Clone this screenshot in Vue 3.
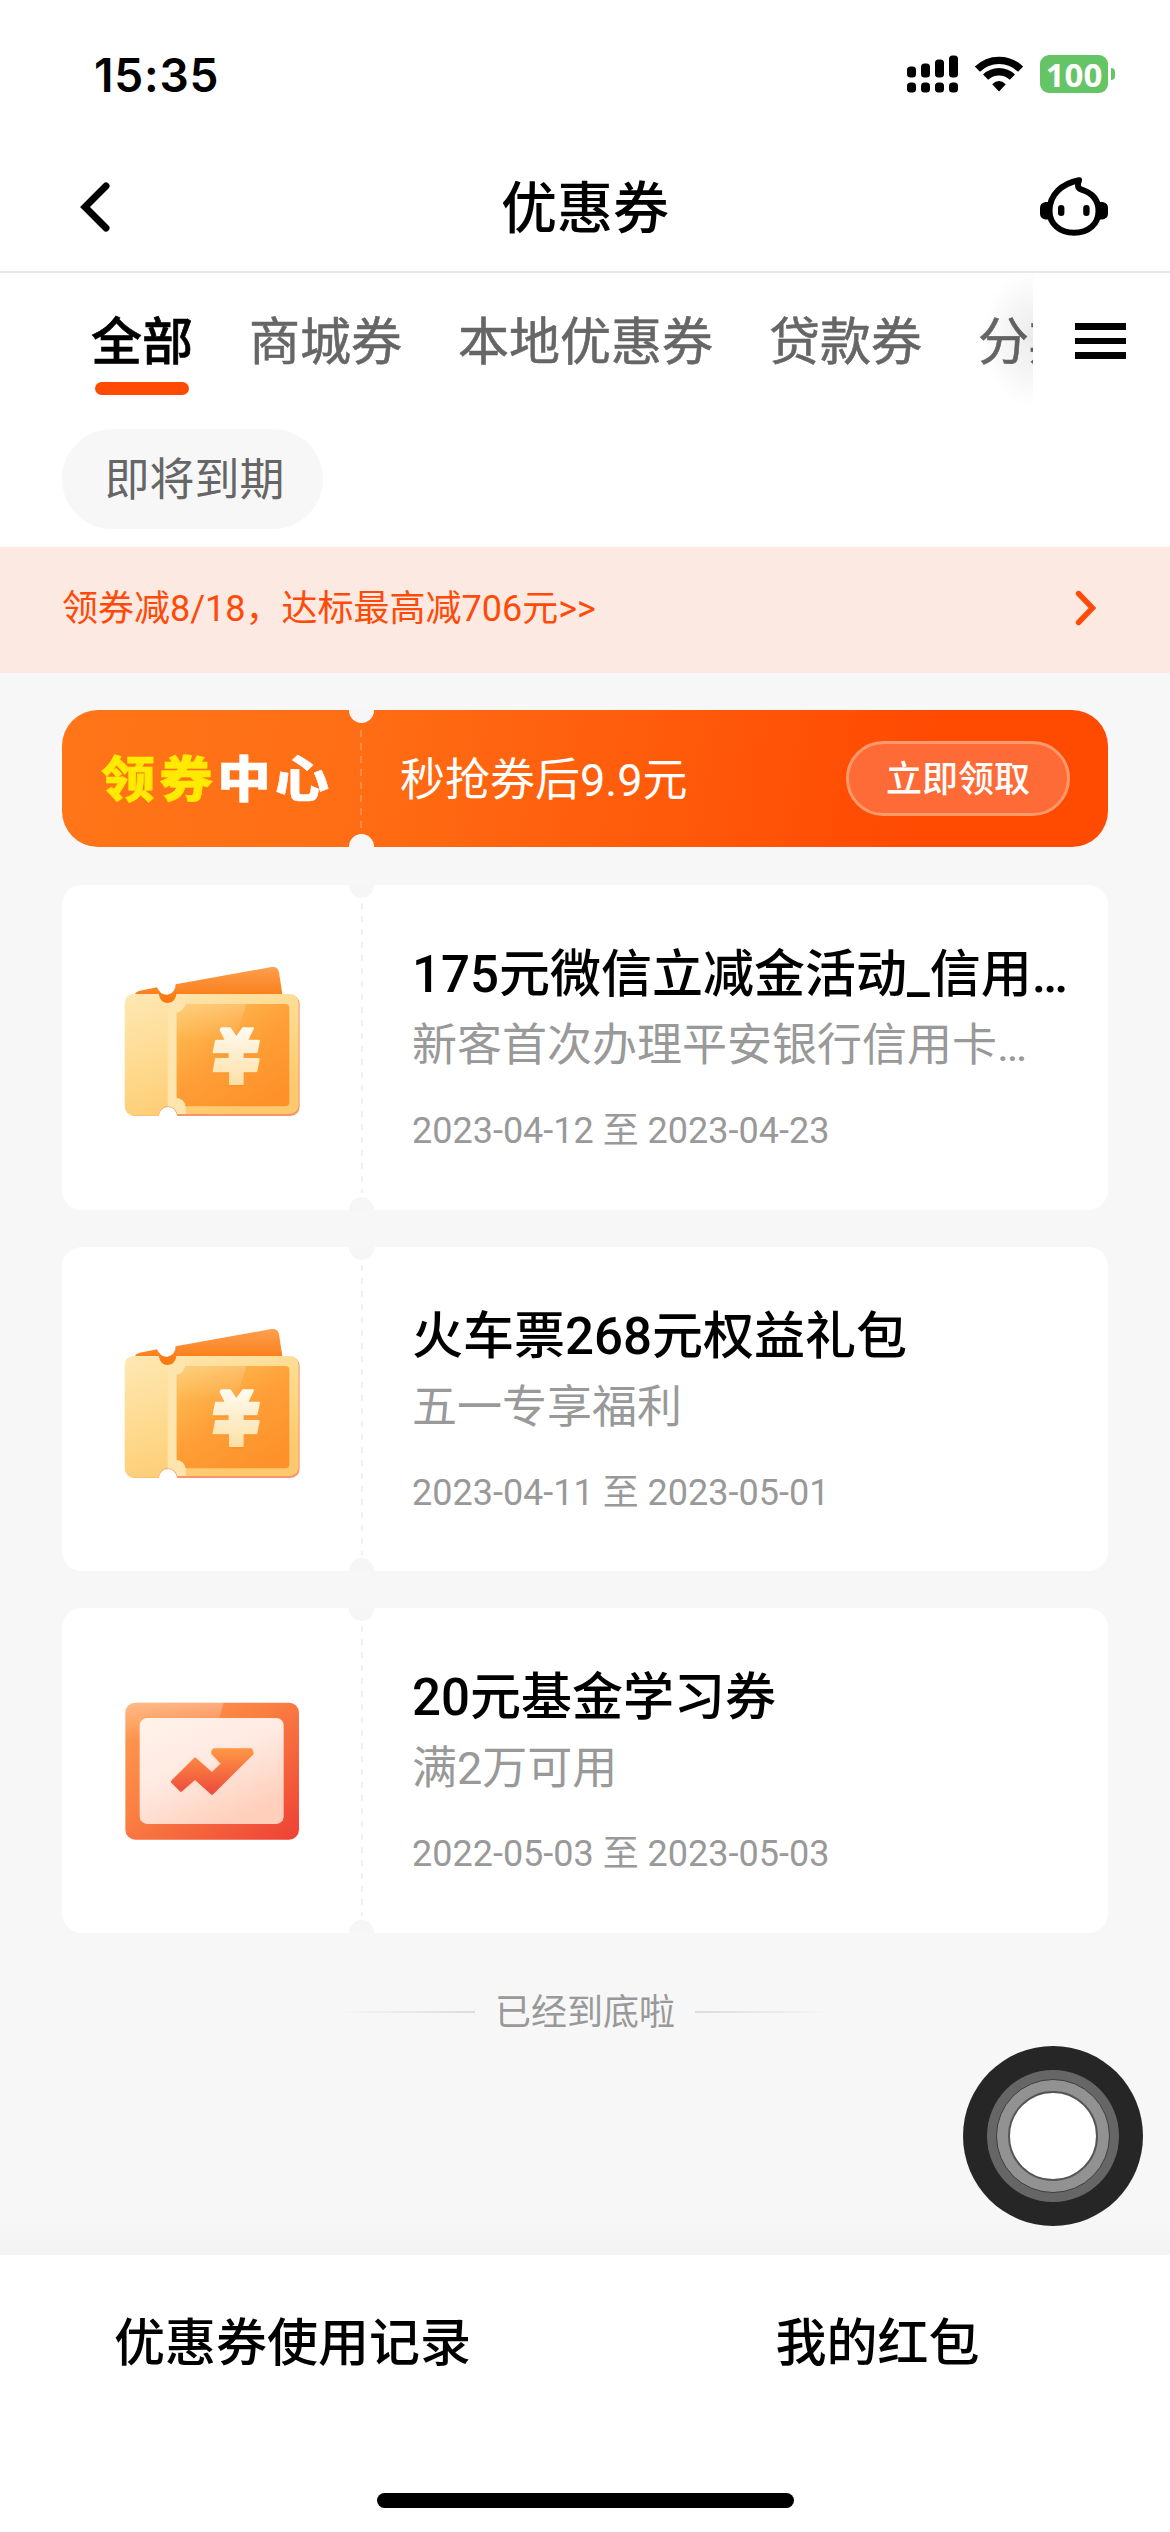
<script setup>
const tabs = ['全部', '商城券', '本地优惠券', '贷款券', '分期券']

const coupons = [
  {
    icon: 'ticket',
    title: '175元微信立减金活动_信用…',
    desc: '新客首次办理平安银行信用卡…',
    from: '2023-04-12',
    to: '2023-04-23',
  },
  {
    icon: 'ticket',
    title: '火车票268元权益礼包',
    desc: '五一专享福利',
    from: '2023-04-11',
    to: '2023-05-01',
  },
  {
    icon: 'fund',
    title: '20元基金学习券',
    desc: '满2万可用',
    from: '2022-05-03',
    to: '2023-05-03',
  },
]
</script>

<template>
  <div class="screen">
    <div class="status">
      <span class="time">15:35</span>
      <div class="status-icons">
        <svg class="signal" viewBox="0 0 51 38">
          <rect x="0" y="11.5" width="9" height="11" rx="3.5" />
          <rect x="14" y="8.5" width="9" height="14" rx="3.5" />
          <rect x="28" y="4.5" width="9" height="18" rx="3.5" />
          <rect x="42" y="0.5" width="9" height="22" rx="3.5" />
          <rect v-for="x in [0, 14, 28, 42]" :key="x" :x="x" y="27.5" width="9" height="10" rx="3.5" />
        </svg>
        <svg class="wifi" viewBox="0 0 50 38">
          <path d="M3.4 14.2A30.8 30.8 0 0 1 46.6 14.2" fill="none" stroke="#000" stroke-width="7.4" />
          <path d="M11.6 22.2A19.2 19.2 0 0 1 38.4 22.2" fill="none" stroke="#000" stroke-width="7.4" />
          <path d="M18.2 29.2Q25 22.6 31.8 29.2L25 36.4Z" />
        </svg>
        <div class="battery"><span>100</span></div>
        <i class="nub"></i>
      </div>
    </div>

    <header class="nav">
      <svg class="back" viewBox="0 0 36 56">
        <path d="M28 7L7 28L28 49" fill="none" stroke="#000" stroke-width="7" stroke-linecap="round" />
      </svg>
      <h1>优惠券</h1>
      <svg class="robot" viewBox="1038 174 72 66">
        <path
          d="M1079 180.2C1062 183.500 1049.500 194.500 1049.500 211C1049.500 224 1060 232.800 1074 232.800C1088.500 232.800 1098.500 224 1098.500 211C1098.500 199 1091 192.500 1081.500 189.600C1077 188.200 1077.500 184.500 1079 180.200Z"
          fill="#fff" stroke="#000" stroke-width="6" stroke-linejoin="round" />
        <path d="M1048 202h-2.500q-5.500 1-5.500 6v5.500q0 5 5.500 6h3zM1100 202h2.500q5.500 1 5.500 6v5.500q0 5-5.500 6h-3z" />
        <rect x="1058" y="205" width="6.400" height="11" rx="3.200" />
        <rect x="1083.200" y="205" width="6.400" height="11" rx="3.200" />
      </svg>
    </header>

    <div class="tabbar">
      <nav class="tabs">
        <span v-for="(t, i) in tabs" :key="t" class="tab" :class="{ active: i === 0 }">{{ t }}</span>
      </nav>
      <div class="menu"><i></i><i></i><i></i></div>
    </div>

    <div class="filters"><span class="pill">即将到期</span></div>

    <div class="notice">
      <span>领券减8/18，达标最高减706元&gt;&gt;</span>
      <svg viewBox="0 0 24 38">
        <path d="M4.500 4.500L18.500 19L4.500 33.500" fill="none" stroke="#ff4a08" stroke-width="5.400" stroke-linecap="round" />
      </svg>
    </div>

    <main class="content">
      <section class="banner">
        <div class="brand"><span>领券</span>中心</div>
        <i class="dash"></i>
        <div class="slogan">秒抢券后9.9元</div>
        <div class="claim">立即领取</div>
      </section>

      <section v-for="c in coupons" :key="c.title" class="card">
        <div class="thumb">
          <svg v-if="c.icon === 'ticket'" viewBox="250 285 540 460">
            <defs>
              <linearGradient id="tBack" x1="0" y1="0" x2="0" y2="1">
                <stop offset="0" stop-color="#ff9f50" />
                <stop offset="1" stop-color="#f97508" />
              </linearGradient>
              <linearGradient id="tBody" x1="0" y1="0" x2="0.500" y2="1">
                <stop offset="0" stop-color="#fde8b4" />
                <stop offset="0.550" stop-color="#fed98c" />
                <stop offset="1" stop-color="#fcc96e" />
              </linearGradient>
              <linearGradient id="tFace" x1="0" y1="0" x2="0.700" y2="1">
                <stop offset="0" stop-color="#fdc45c" />
                <stop offset="0.550" stop-color="#ff9f37" />
                <stop offset="1" stop-color="#fe912a" />
              </linearGradient>
              <linearGradient id="tYen" x1="0" y1="0" x2="0" y2="1">
                <stop offset="0" stop-color="#fffaf0" />
                <stop offset="1" stop-color="#fee0a6" />
              </linearGradient>
              <linearGradient id="tShine" x1="0" y1="0" x2="0" y2="1">
                <stop offset="0" stop-color="#fff" stop-opacity=".2" />
                <stop offset="1" stop-color="#fff" stop-opacity="0" />
              </linearGradient>
            </defs>
            <path d="M285 372Q290 364 300 362L352 352Q362 376 384 374Q407 370 408 343L696 291Q714 289 718 306L728 372V402H340Z" fill="url(#tBack)" />
            <path d="M285 375H357Q362 400 384 400Q406 400 411 375H750Q780 375 780 405V708Q780 738 750 738H413Q406 711 385 711Q363 711 357 738H285Q257 735 257 705V403Q257 375 285 375Z" fill="#f99468" />
            <path d="M284 372H357Q362 399 384 399Q406 399 411 372H748Q777 372 777 401V703Q777 732 748 732H413Q406 709 385 709Q363 709 357 737H284Q255 735 255 706V401Q255 372 284 372Z" fill="url(#tBody)" />
            <path d="M384 399Q406 399 411 372H437V402Q432 425 411 428V683Q434 686 438 709V732H413Q406 709 384 709Z" fill="#fee4ad" />
            <path d="M437 402H737Q749 402 749 414V697Q749 709 737 709H438Q434 686 411 683V428Q432 425 437 402Z" fill="url(#tFace)" />
            <path d="M437 402H620L586 510H411V428Q432 425 437 402Z" fill="url(#tShine)" />
            <g fill="#ee821f" opacity=".3" transform="translate(0 5)">
              <path d="M545 473H571L590 500L610 473H640L622 510H659L652 549H611V565H658L651 605H610V645H570V605H521L529 565H568V549H521L529 510H559L543 478Z" />
            </g>
            <path d="M545 475H571L590 503L610 475H640L622 512H658L651 547H609V567H657L650 604H609V642H571V604H522L529 567H570V547H522L529 512H559L543 480Z" fill="url(#tYen)" stroke="url(#tYen)" stroke-width="6" stroke-linejoin="round" />
          </svg>
          <svg v-else viewBox="250 294 540 460">
            <defs>
              <linearGradient id="fFrame" x1="0" y1="0" x2="1" y2="1">
                <stop offset="0" stop-color="#ff9f52" />
                <stop offset="0.450" stop-color="#fa7d42" />
                <stop offset="1" stop-color="#ee4035" />
              </linearGradient>
              <linearGradient id="fPane" x1="0" y1="0" x2="0.600" y2="1">
                <stop offset="0" stop-color="#fff3ea" />
                <stop offset="0.500" stop-color="#ffeae2" />
                <stop offset="1" stop-color="#ffcfbb" />
              </linearGradient>
              <linearGradient id="fLine" x1="0" y1="0" x2="0" y2="1">
                <stop offset="0" stop-color="#ff9544" />
                <stop offset="1" stop-color="#ed4b3d" />
              </linearGradient>
              <linearGradient id="fShine" x1="0" y1="0" x2="0" y2="1">
                <stop offset="0" stop-color="#fff" stop-opacity=".3" />
                <stop offset="1" stop-color="#fff" stop-opacity="0" />
              </linearGradient>
              <filter id="fGlow" x="-20%" y="-30%" width="140%" height="160%"><feGaussianBlur stdDeviation="7" /></filter>
            </defs>
            <rect x="257" y="338" width="521" height="411" rx="30" fill="url(#fFrame)" />
            <path d="M287 338H552L520 450H257V368Q257 338 287 338Z" fill="url(#fShine)" />
            <rect x="300" y="384" width="432" height="318" rx="22" fill="url(#fPane)" />
            <path d="M400 575L466 508L517 552L546 520L523 494V481H636L637 490L517 610L466 566L424 602Z" fill="#fb9a70" opacity=".5" filter="url(#fGlow)" />
            <path d="M399 575L466 508L517 553L550 521L520 490Q518 480 528 480H634L637 490L517 609L466 563L424 600Z" fill="url(#fLine)" stroke="url(#fLine)" stroke-width="10" stroke-linejoin="round" />
          </svg>
        </div>
        <i class="dash"></i>
        <div class="info">
          <h2>{{ c.title }}</h2>
          <p class="desc">{{ c.desc }}</p>
          <p class="date">{{ c.from }} 至 {{ c.to }}</p>
        </div>
      </section>

      <div class="end"><i></i><span>已经到底啦</span><i class="right"></i></div>
    </main>

    <div class="assist"><div class="ring"><div class="ring2"><div class="core"></div></div></div></div>

    <footer class="bottom">
      <div class="links"><span>优惠券使用记录</span><span>我的红包</span></div>
      <div class="home"></div>
    </footer>
  </div>
</template>

<style>
body {
  margin: 0;
  background: #fff;
}
</style>

<style scoped>
.screen {
  position: relative;
  display: flex;
  flex-direction: column;
  width: 1170px;
  height: 2532px;
  overflow: hidden;
  background: #fff;
  color: #000;
  font-family: Roboto, "Noto Sans CJK SC", sans-serif;
}
.screen * {
  box-sizing: border-box;
}
h1, h2, p {
  margin: 0;
}
i {
  display: block;
}
.status {
  display: flex;
  justify-content: space-between;
  height: 145px;
  padding: 55px 55px 0 94px;
}
.time {
  height: 40px;
  font: 600 46px/40px Inter, sans-serif;
  letter-spacing: 0.8px;
}
.status-icons {
  display: flex;
  height: 38px;
}
.signal {
  width: 51px;
  height: 38px;
}
.wifi {
  width: 50px;
  height: 38px;
  margin: 0 16px;
}
.battery {
  width: 68px;
  height: 38px;
  border-radius: 9px;
  background: #65c466;
  color: #fff;
  text-align: center;
  font: 700 33px/39px "Noto Sans", sans-serif;
}
.nub {
  width: 4px;
  height: 12px;
  margin: 13px 0 0 3px;
  border-radius: 0 5px 5px 0;
  background: #65c466;
}
.nav {
  display: flex;
  justify-content: space-between;
  align-items: center;
  height: 128px;
  padding: 0 60px 2px 78px;
  border-bottom: 2px solid #e6e8e7;
}
.back {
  width: 36px;
  height: 56px;
}
.nav h1 {
  height: 56px;
  margin-left: 18px;
  font-size: 56px;
  line-height: 60px;
  font-weight: 500;
}
.robot {
  width: 72px;
  height: 66px;
}
.tabbar {
  display: flex;
  height: 142px;
}
.tabs {
  position: relative;
  display: flex;
  flex: none;
  gap: 56px;
  width: 1033px;
  padding: 44px 0 0 91px;
  overflow: hidden;
  white-space: nowrap;
}
.tabs::after {
  content: "";
  position: absolute;
  right: 0;
  top: 0;
  width: 56px;
  height: 142px;
  background: radial-gradient(ellipse 52px 70px at 100% 46%, rgba(0, 0, 0, 0.08), rgba(0, 0, 0, 0.04) 50%, transparent 100%);
}
.tab {
  flex: none;
  height: 88px;
  font-size: 51px;
  line-height: 52px;
  color: #666;
  -webkit-text-stroke: 0.6px currentColor;
}
.tab.active {
  color: #000;
  font-weight: 500;
}
.tab.active::after {
  content: "";
  display: block;
  width: 94px;
  height: 13px;
  margin: 13px 0 0 4px;
  border-radius: 7px;
  background: #ff4a04;
}
.menu {
  display: flex;
  flex-direction: column;
  gap: 8px;
  padding: 50px 0 0 42px;
}
.menu i {
  width: 51px;
  height: 6.500px;
  background: #000;
}
.filters {
  display: flex;
  height: 132px;
  padding: 14px 62px 0;
}
.pill {
  width: 261px;
  height: 100px;
  padding-left: 4px;
  border-radius: 50px;
  background: #f7f7f7;
  color: #666;
  font-size: 45px;
  line-height: 103px;
  text-align: center;
}
.notice {
  display: flex;
  justify-content: space-between;
  height: 126px;
  padding: 0 72px 0 62px;
  background: #fce9e2;
  color: #ff4a08;
  font-size: 36px;
  line-height: 125px;
  white-space: nowrap;
}
.notice svg {
  width: 24px;
  height: 38px;
  margin-top: 42px;
}
.content {
  display: flex;
  flex-direction: column;
  gap: 37px;
  height: 1582px;
  padding: 37px 62px 0;
  background: linear-gradient(#f7f7f7 1540px, #f3f3f3 1582px);
}
.banner {
  position: relative;
  display: flex;
  align-items: center;
  flex: none;
  height: 137px;
  margin-bottom: 1px;
  padding: 0 38px 0 39px;
  border-radius: 36px;
  overflow: hidden;
  background: linear-gradient(100deg, #ff7518 0, #ff6f15 25%, #ff4a02 82%);
  color: #fff;
}
.banner::before,
.banner::after,
.card::before,
.card::after {
  content: "";
  position: absolute;
  left: 287px;
  width: 25px;
  height: 25px;
  border-radius: 50%;
  background: #f6f6f6;
}
.banner::before,
.card::before {
  top: -12px;
}
.banner::after,
.card::after {
  bottom: -12px;
}
.brand {
  width: 259px;
  margin-top: 4px;
  font-size: 54px;
  font-weight: 900;
  line-height: 60px;
  letter-spacing: 4px;
  transform: scaleY(0.9);
  -webkit-text-stroke: 0.5px currentColor;
}
.brand span {
  color: #ffea00;
}
.dash {
  flex: none;
  width: 2px;
  background: repeating-linear-gradient(#f0f0f0 0 6px, transparent 6px 13px);
}
.banner .dash {
  height: 98px;
  background: repeating-linear-gradient(#ff9048 0 7px, transparent 7px 13px);
}
.slogan {
  flex: 1;
  height: 60px;
  margin-left: 38px;
  font-size: 45px;
  line-height: 63px;
}
.claim {
  width: 224px;
  height: 75px;
  border: 3px solid #ff9a6c;
  border-radius: 38px;
  background: #ff6b36;
  font-size: 36px;
  font-weight: 500;
  line-height: 72px;
  text-align: center;
}
.card {
  position: relative;
  display: flex;
  flex: none;
  height: 324.600px;
  border-radius: 20px;
  overflow: hidden;
  background: #fff;
}
.thumb {
  width: 299px;
  padding: 80px 0 0 61px;
}
.thumb svg {
  display: block;
  width: 180px;
  height: 153.300px;
}
.card .dash {
  height: 290px;
  margin-top: 18px;
}
.info {
  margin-left: 49px;
  white-space: nowrap;
}
.info h2 {
  height: 60px;
  margin-top: 60px;
  font-size: 51px;
  line-height: 60px;
  font-weight: 500;
}
.desc {
  height: 54px;
  margin-top: 14px;
  color: #999;
  font-size: 45px;
  line-height: 54px;
}
.date {
  height: 44px;
  margin-top: 36px;
  color: #999;
  font-size: 36px;
  line-height: 44px;
}
.end {
  display: flex;
  justify-content: center;
  align-items: center;
  gap: 20px;
  height: 44px;
  margin-top: 20px;
  color: #999;
  font-size: 36px;
  line-height: 46px;
}
.end span {
  height: 44px;
}
.end i {
  width: 138px;
  height: 2px;
  background: linear-gradient(90deg, transparent, #dcdcdc);
}
.end .right {
  background: linear-gradient(270deg, transparent, #dcdcdc);
}
.assist {
  position: absolute;
  left: 963px;
  top: 2046px;
  display: flex;
  justify-content: center;
  align-items: center;
  width: 180px;
  height: 180px;
  border-radius: 50%;
  background: #262626;
}
.ring,
.ring2,
.core {
  display: flex;
  justify-content: center;
  align-items: center;
  border-radius: 50%;
}
.ring {
  width: 132px;
  height: 132px;
  background: #666;
}
.ring2 {
  width: 114px;
  height: 114px;
  border: 1.500px solid #3c3c3c;
  background: #929292;
}
.core {
  width: 90px;
  height: 90px;
  border: 2px solid #555;
  background: #fff;
}
.bottom {
  display: flex;
  flex-direction: column;
  align-items: center;
  flex: 1;
  background: #fff;
}
.links {
  display: flex;
  width: 1170px;
  height: 238px;
  padding-top: 59px;
}
.links span {
  width: 585px;
  height: 60px;
  text-align: center;
  font-size: 51px;
  font-weight: 500;
  line-height: 60px;
}
.home {
  width: 417px;
  height: 15px;
  border-radius: 8px;
  background: #000;
}
</style>
